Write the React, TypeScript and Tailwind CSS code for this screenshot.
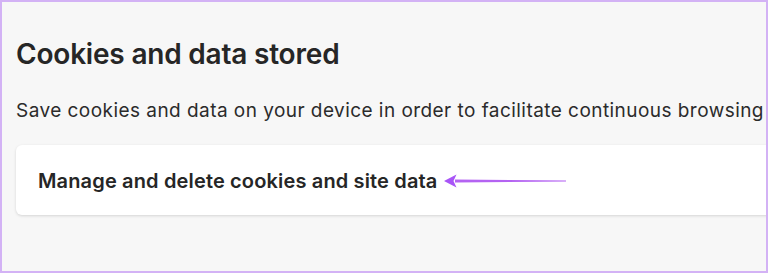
import React from 'react';

function PointerArrow() {
  return (
    <svg width="126" height="16" viewBox="0 0 126 16" className="shrink-0">
      <path d="M12 6.6 L123 7.4 L123 8.4 L12 9.6 Z" fill="#b463f2" />
      <path d="M1 8 L13.5 1.5 L10.5 8 L13.5 14.5 Z" fill="#a855f7" />
    </svg>
  );
}

export default function App() {
  return (
    <div
      className="h-[273px] w-[768px] overflow-hidden border-2 border-[#d3b2f5] bg-[#f7f7f7] text-[#262626]"
      style={{ fontFamily: 'Inter, "Liberation Sans", sans-serif' }}
    >
      <div className="pl-[14px] pt-[34px]">
        <h1 className="text-[28px] font-semibold leading-[36px] tracking-[-0.2px]">Cookies and data stored</h1>
        <p className="mt-[27px] whitespace-nowrap text-[19px] leading-[24px] tracking-[0.45px] text-[#2b2b2b]">
          Save cookies and data on your device in order to facilitate continuous browsing by remembering your preferences.
        </p>
        <div className="mt-[22px] flex h-[70px] w-[800px] items-center rounded-l-[6px] bg-white pl-[22px] shadow-[0_1px_3px_rgba(0,0,0,0.14)]">
          <span className="pt-[2px] text-[20px] font-semibold tracking-[0.15px] text-[#262626]">
            Manage and delete cookies and site data
          </span>
          <span className="ml-[5px] flex items-center pt-[2px]">
            <PointerArrow />
          </span>
        </div>
      </div>
    </div>
  );
}
